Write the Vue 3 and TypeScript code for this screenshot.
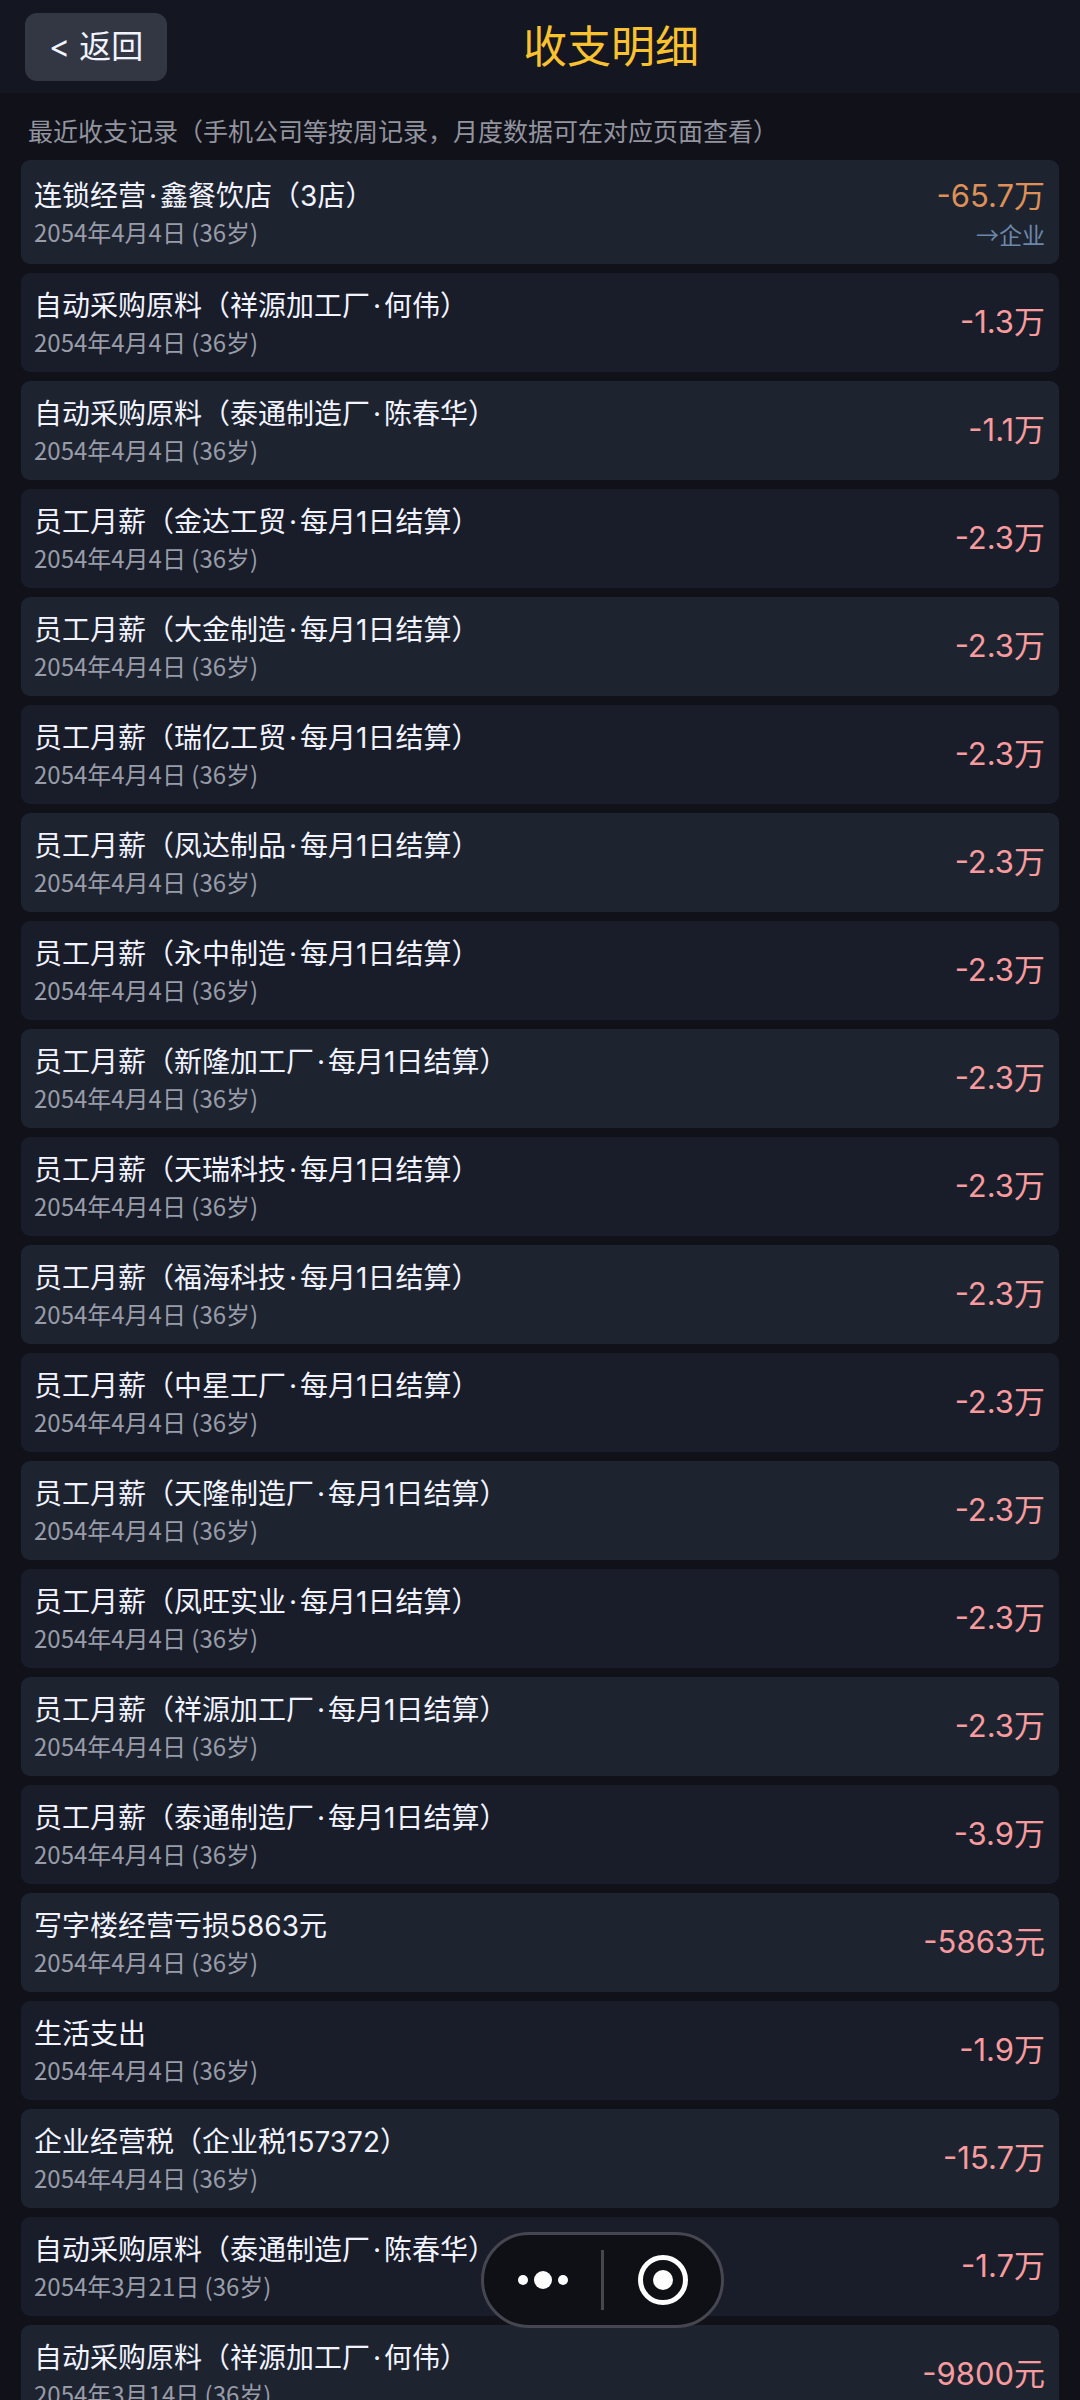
<script setup lang="ts">
interface LedgerRecord {
  title: string[]
  date: string
  amount: string
  target?: string
}

const payday = '每月1日结算）'
const today = '2054年4月4日 (36岁)'

function salary(company: string, amount = '-2.3万'): LedgerRecord {
  return { title: [`员工月薪（${company}`, payday], date: today, amount }
}

const records: LedgerRecord[] = [
  { title: ['连锁经营', '鑫餐饮店（3店）'], date: today, amount: '-65.7万', target: '→企业' },
  { title: ['自动采购原料（祥源加工厂', '何伟）'], date: today, amount: '-1.3万' },
  { title: ['自动采购原料（泰通制造厂', '陈春华）'], date: today, amount: '-1.1万' },
  salary('金达工贸'),
  salary('大金制造'),
  salary('瑞亿工贸'),
  salary('凤达制品'),
  salary('永中制造'),
  salary('新隆加工厂'),
  salary('天瑞科技'),
  salary('福海科技'),
  salary('中星工厂'),
  salary('天隆制造厂'),
  salary('凤旺实业'),
  salary('祥源加工厂'),
  salary('泰通制造厂', '-3.9万'),
  { title: ['写字楼经营亏损5863元'], date: today, amount: '-5863元' },
  { title: ['生活支出'], date: today, amount: '-1.9万' },
  { title: ['企业经营税（企业税157372）'], date: today, amount: '-15.7万' },
  { title: ['自动采购原料（泰通制造厂', '陈春华）'], date: '2054年3月21日 (36岁)', amount: '-1.7万' },
  { title: ['自动采购原料（祥源加工厂', '何伟）'], date: '2054年3月14日 (36岁)', amount: '-9800元' },
]
</script>

<template>
  <div class="page">
    <header class="header">
      <button type="button" class="back">&lt; 返回</button>
      <h1 class="heading">收支明细</h1>
    </header>

    <main class="content">
      <p class="caption">最近收支记录（手机公司等按周记录，月度数据可在对应页面查看）</p>
      <ul class="list">
        <li v-for="(record, index) in records" :key="index" class="row">
          <div class="info">
            <div class="title">
              <template v-for="(part, i) in record.title" :key="i"><span v-if="i > 0" class="dot">·</span>{{ part }}</template>
            </div>
            <div class="date">{{ record.date }}</div>
          </div>
          <div class="money">
            <div class="amount" :class="{ transfer: record.target }">{{ record.amount }}</div>
            <div v-if="record.target" class="target">{{ record.target }}</div>
          </div>
        </li>
      </ul>
    </main>

    <div class="capsule">
      <button type="button" class="capsule-button" aria-label="更多">
        <svg width="50" height="18" viewBox="0 0 50 18" fill="#fff" aria-hidden="true">
          <circle cx="5" cy="9" r="5" />
          <circle cx="25" cy="9" r="9" />
          <circle cx="45" cy="9" r="5" />
        </svg>
      </button>
      <span class="divider"></span>
      <button type="button" class="capsule-button" aria-label="关闭">
        <svg width="50" height="50" viewBox="0 0 50 50" aria-hidden="true">
          <circle cx="25" cy="25" r="22.5" fill="none" stroke="#fff" stroke-width="5" />
          <circle cx="25" cy="25" r="10" fill="#fff" />
        </svg>
      </button>
    </div>
  </div>
</template>

<style>
body {
  margin: 0;
  background: #11111a;
}
</style>

<style scoped>
.page {
  display: flex;
  flex-direction: column;
  height: 100vh;
  overflow: hidden;
  background: #11111a;
  color: #f1f3ff;
  font-family: Inter, "Noto Sans CJK SC", sans-serif;
}

.header {
  flex: none;
  display: flex;
  align-items: center;
  padding: 13px 25px 12px;
  background: #141722;
}

.back {
  height: 68px;
  padding: 0 24px;
  border: 0;
  border-radius: 12px;
  background: #323743;
  color: #f1f3ff;
  font-family: inherit;
  font-size: 32px;
  line-height: 68px;
}

.heading {
  flex: 1;
  margin: 0;
  color: #fbc22f;
  font-size: 44px;
  font-weight: 400;
  line-height: 64px;
  text-align: center;
}

.content {
  flex: 1;
  min-height: 0;
  padding: 21px 21px 0;
  overflow-y: auto;
  scrollbar-width: none;
}

.caption {
  margin: 0 7px 10px;
  color: #92949e;
  font-size: 25px;
  line-height: 36px;
}

.list {
  display: flex;
  flex-direction: column;
  gap: 9px;
  margin: 0;
  padding: 0;
  list-style: none;
}

.row {
  display: flex;
  align-items: center;
  justify-content: space-between;
  padding: 14px 14px 16px 13px;
  border-radius: 9px;
  background: #191c29;
}

.row:nth-child(odd) {
  background: #1e2330;
}

.title {
  font-size: 28px;
  line-height: 39px;
}

.dot {
  padding: 0 3px;
}

.date {
  margin-top: 2px;
  color: #989ca8;
  font-family: "Noto Sans CJK SC", sans-serif;
  font-size: 24px;
  line-height: 28px;
}

.money {
  text-align: right;
}

.amount {
  color: #f79b9f;
  font-size: 31px;
  line-height: 44px;
}

.amount.transfer {
  color: #dd9158;
}

.target {
  margin-top: 2px;
  color: #6b88aa;
  font-family: "Noto Sans CJK SC", sans-serif;
  font-size: 23px;
  line-height: 28px;
}

.capsule {
  position: fixed;
  right: 356px;
  bottom: 72px;
  display: flex;
  align-items: center;
  box-sizing: border-box;
  width: 243px;
  height: 96px;
  border: 3px solid #45464f;
  border-radius: 48px;
  background: #0e1016;
}

.capsule-button {
  flex: 1;
  display: flex;
  align-items: center;
  justify-content: center;
  height: 90px;
  padding: 0;
  border: 0;
  background: none;
}

.divider {
  width: 3px;
  height: 60px;
  background: #45464f;
}
</style>
